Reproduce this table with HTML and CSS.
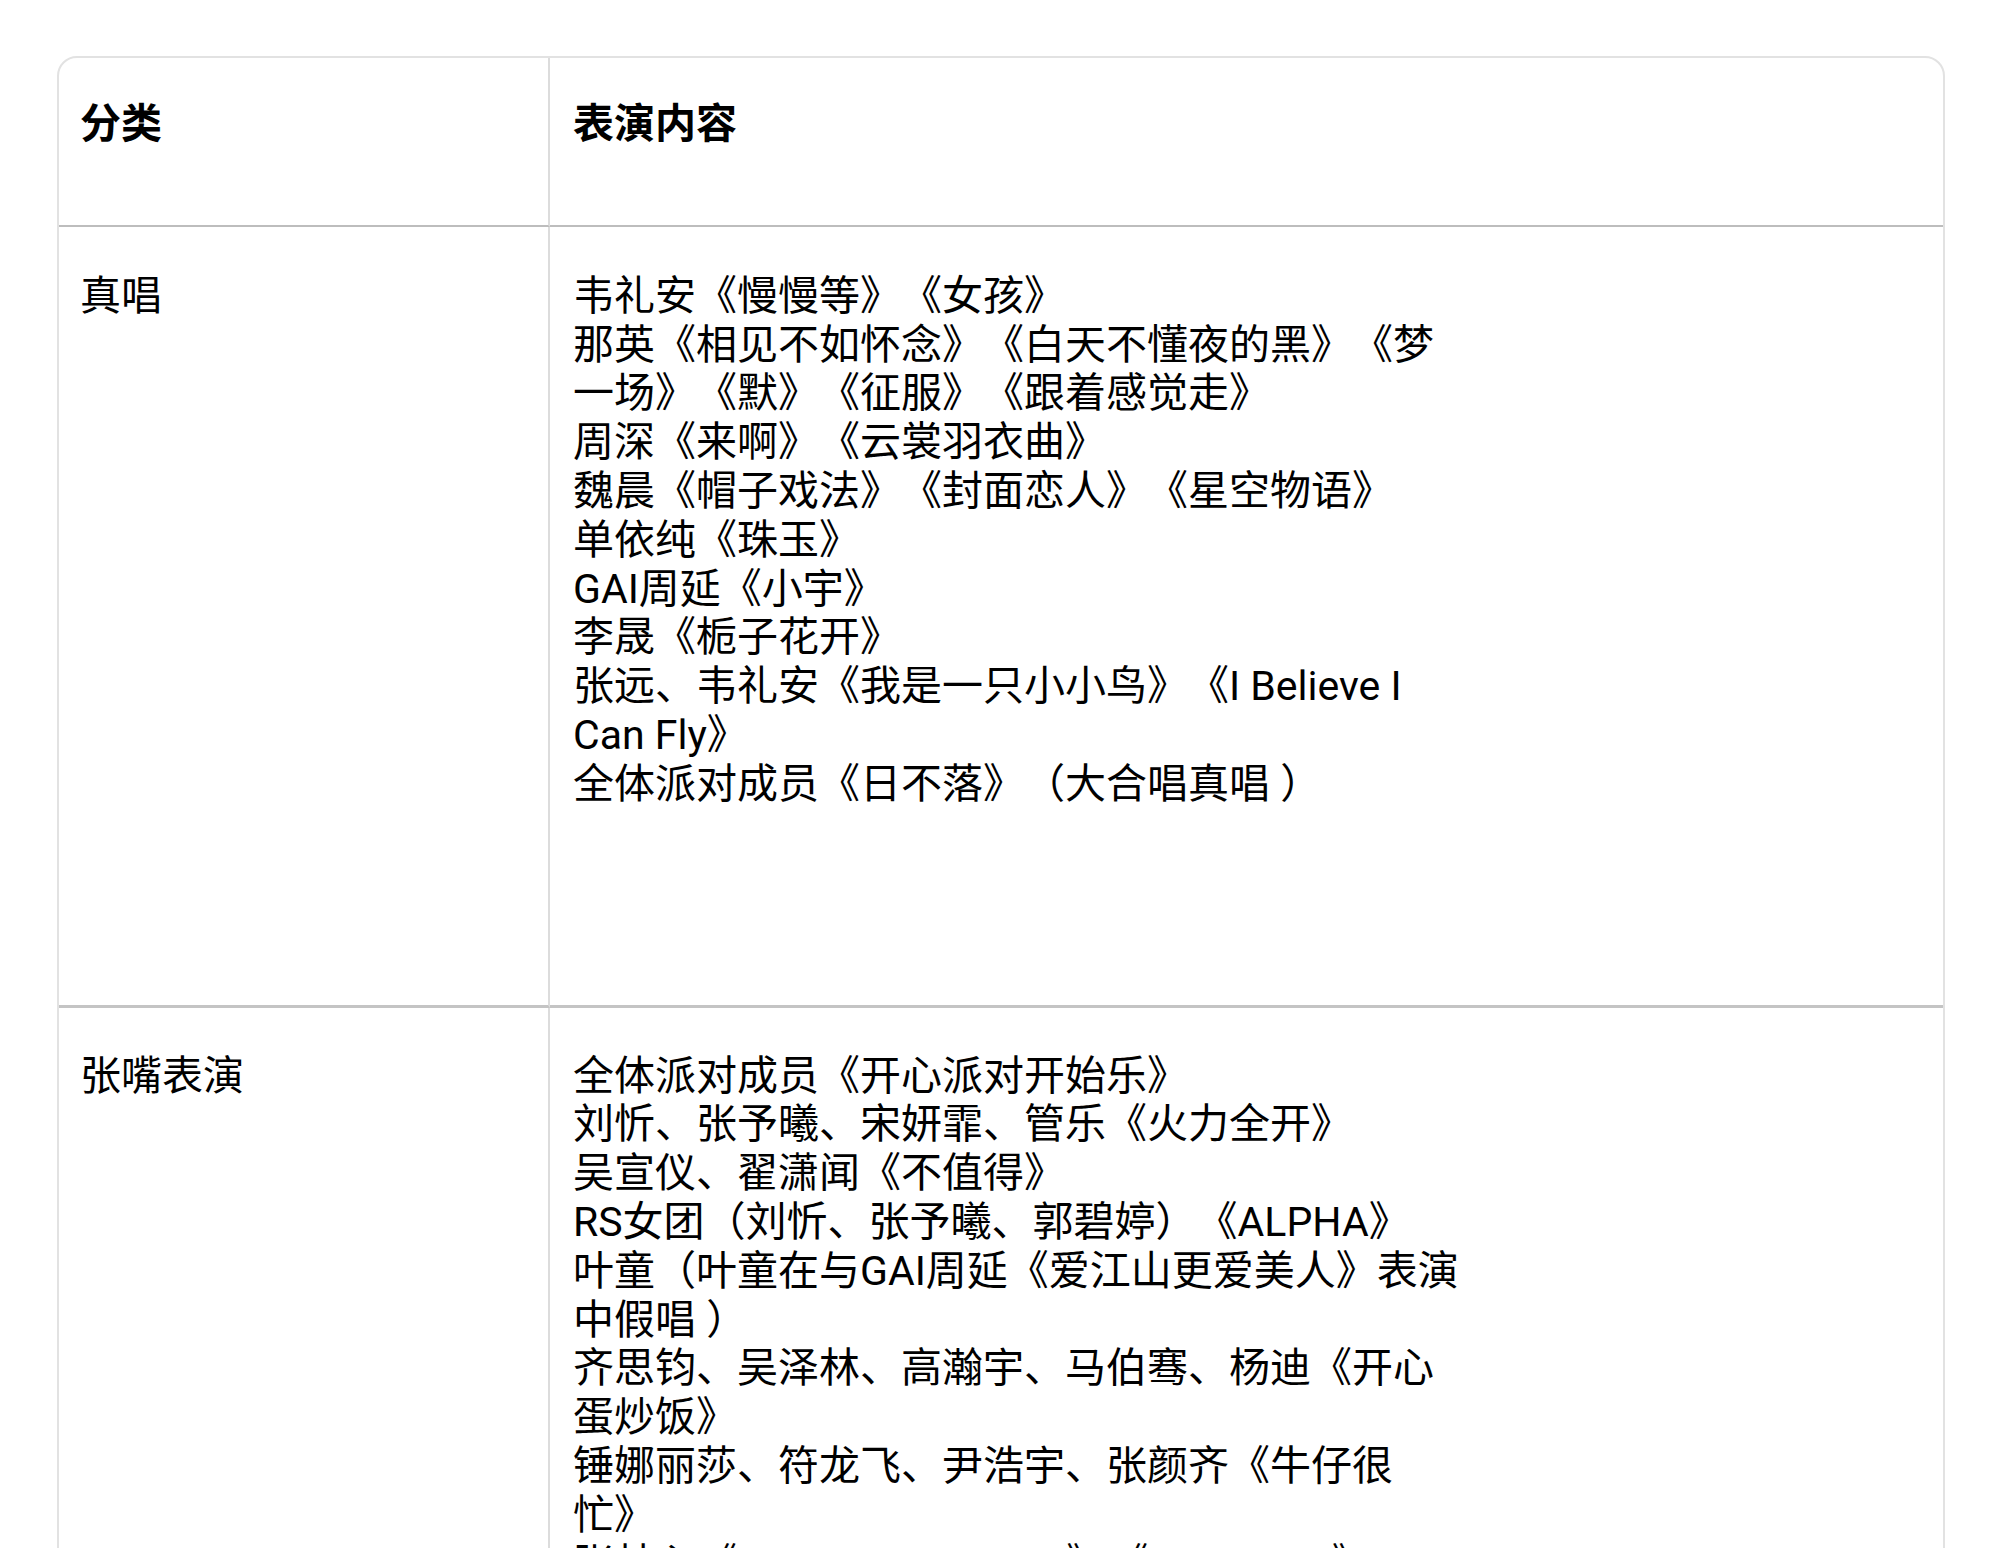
FILE: index.html
```html
<!DOCTYPE html>
<html lang="zh-CN">
<head>
<meta charset="utf-8">
<title>表演内容</title>
<link rel="stylesheet" href="styles.css">
</head>
<body>
<div class="table-wrap">
  <table class="perf-table">
    <colgroup>
      <col class="col-cat">
      <col class="col-content">
    </colgroup>
    <thead>
      <tr class="head-row">
        <th class="cell cell-cat">分类</th>
        <th class="cell cell-content">表演内容</th>
      </tr>
    </thead>
    <tbody>
      <tr class="row row-first">
        <td class="cell cell-cat">真唱</td>
        <td class="cell cell-content">
          <div class="list">
            韦礼安《慢慢等》《女孩》<br>
            那英《相见不如怀念》《白天不懂夜的黑》《梦一场》《默》《征服》《跟着感觉走》<br>
            周深《来啊》《云裳羽衣曲》<br>
            魏晨《帽子戏法》《封面恋人》《星空物语》<br>
            单依纯《珠玉》<br>
            GAI周延《小宇》<br>
            李晟《栀子花开》<br>
            张远、韦礼安《我是一只小小鸟》《I Believe I Can Fly》<br>
            全体派对成员《日不落》（大合唱真唱 ）
          </div>
        </td>
      </tr>
      <tr class="row row-second">
        <td class="cell cell-cat">张嘴表演</td>
        <td class="cell cell-content">
          <div class="list">
            全体派对成员《开心派对开始乐》<br>
            刘忻、张予曦、宋妍霏、管乐《火力全开》<br>
            吴宣仪、翟潇闻《不值得》<br>
            RS女团（刘忻、张予曦、郭碧婷）《ALPHA》<br>
            叶童（叶童在与GAI周延《爱江山更爱美人》表演中假唱 ）<br>
            齐思钧、吴泽林、高瀚宇、马伯骞、杨迪《开心蛋炒饭》<br>
            锤娜丽莎、符龙飞、尹浩宇、张颜齐《牛仔很忙》<br>
            张林心《sugar sugar sugar》《super star》<br>
            全体派对成员《快乐星球》
          </div>
        </td>
      </tr>
    </tbody>
  </table>
</div>
</body>
</html>
```

FILE: styles.css
```css
html, body {
  margin: 0;
  padding: 0;
  background: #ffffff;
}

body {
  font-family: Roboto, "Noto Sans CJK SC", sans-serif;
  color: #000000;
}

.table-wrap {
  margin: 56px 0 0 57px;
  width: 1884px;
  border: 2px solid #e2e2e2;
  border-radius: 20px;
  overflow: hidden;
}

.perf-table {
  width: 100%;
  border-collapse: separate;
  border-spacing: 0;
  table-layout: fixed;
}

.col-cat {
  width: 491px;
}

.cell {
  text-align: left;
  vertical-align: top;
  font-size: 41px;
  line-height: 48.8px;
  font-weight: 400;
  padding: 43px 22px 0 22px;
  text-spacing-trim: space-all;
}

.cell-cat {
  border-right: 2px solid #dcdcdc;
  padding-left: 21px;
}

.cell-content {
  padding-left: 23px;
}

.head-row .cell {
  font-weight: 700;
  padding-top: 42px;
  padding-bottom: 76px;
  border-bottom: 2px solid #bdbdbd;
}

.row-first .cell {
  padding-top: 45px;
  padding-bottom: 196px;
  border-bottom: 3px solid #c4c4c4;
}

.row-second .cell {
  padding-top: 44px;
  padding-bottom: 120px;
}

.list {
  width: 895px;
  text-spacing-trim: space-all;
}
```
